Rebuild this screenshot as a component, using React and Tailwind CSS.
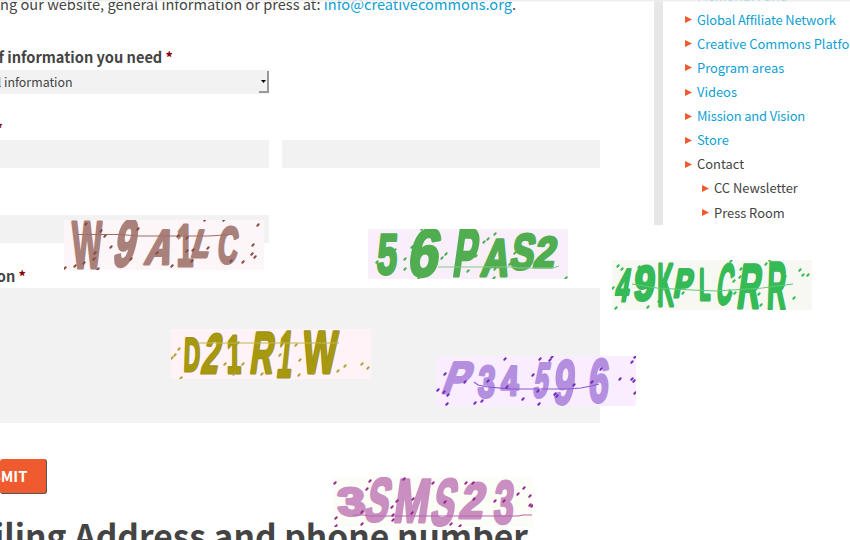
const captchas = [
  {
    place: "left-[64px] top-[220px]", bg: "#fdf6f9", ink: "#a9817a", edge: "#a9817a", line: "#a06d64", dot: "#874c42",
    chars: [["W", 7, 39, -1, 50, 0], ["9", 51, 75, -2, 48, -12], ["A", 82, 113, 8, 46, -16], ["1", 113, 129, 2, 48, 0], ["L", 129, 149, 8, 39, -16], ["C", 154, 175, 5, 45, -6]],
    path: "M13 14.5H55L75 16H145L168 14.5",
    dots: [[22, 4], [37, 11], [41, 16], [74, 9], [47, 27], [31, 33], [30, 39], [20, 43], [11, 46], [1, 48], [34, 49], [67, 39], [93, 33], [108, 46], [114, 16], [123, 18], [123, 31], [128, 41], [129, 30], [144, 28], [141, 0], [160, 0], [194, 5], [189, 25], [188, 34], [191, 37], [179, 42], [167, 41]],
  },
  {
    place: "left-[368px] top-[229px]", bg: "#f9effb", ink: "#50ad50", edge: "#50ad50", line: "#83ca85", dot: "#50ad50",
    chars: [["5", 9, 30, 3, 47, -4], ["6", 42, 74, -2, 49, -10], ["P", 87, 111, -2, 49, -8], ["A", 113, 145, 8, 49, -10], ["S", 143, 169, 3, 42, -10], ["2", 167, 190, 6, 40, -12]],
    path: "M70 38H145L150 39H185L191 37",
    dots: [[27, 21], [9, 33], [37, 30], [44, 18], [37, 40], [51, 49], [78, 25], [74, 29], [54, 0], [116, 13], [127, 5], [120, 10], [108, 27], [100, 42], [127, 40], [142, 35], [147, 24], [126, 49], [198, 49]],
  },
  {
    place: "left-[612px] top-[260px]", bg: "#f7f8f1", ink: "#33bb55", edge: "#3fb45c", line: "#62c978", dot: "#33bb55",
    chars: [["4", 4, 20, 7, 43, -10], ["9", 22, 44, 4, 42, -6], ["K", 45, 62, 1, 48, 0], ["P", 63, 82, 7, 39, -10], ["L", 87, 99, 7, 42, 0], ["C", 105, 123, 2, 46, -8], ["R", 126, 151, 2, 50, -8], ["R", 155, 175, 0, 51, -2]],
    path: "M20 24L45 28L80 30L104 31L150 28L181 24",
    dots: [[6, 6], [10, 9], [27, 7], [1, 28], [6, 32], [4, 48], [36, 47], [47, 41], [54, 13], [71, 33], [119, 1], [122, 21], [128, 17], [129, 9], [117, 40], [123, 33], [147, 34], [149, 45], [154, 4], [158, 0], [173, 17], [188, 10], [191, 15], [196, 15], [182, 38]],
  },
  {
    place: "left-[171px] top-[329px]", bg: "#fff3f7", ink: "#a6980f", edge: "#a0921a", line: "#c1b54b", dot: "#b2a337",
    chars: [["D", 13, 29, 7, 44, -2], ["2", 32, 52, 3, 46, -12], ["1", 56, 70, 5, 46, 0], ["R", 80, 105, 1, 46, -8], ["1", 107, 123, 0, 50, -6], ["W", 131, 168, 0, 46, -4]],
    path: "M28 14H168",
    dots: [[8, 20], [4, 26], [1, 29], [10, 49], [54, 35], [72, 35], [63, 45], [67, 14], [91, 45], [109, 26], [125, 16], [128, 46], [129, 31], [143, 44], [167, 42], [174, 37], [191, 35], [197, 39]],
  },
  {
    place: "left-[436px] top-[356px]", bg: "#f9edff", ink: "#b48fe0", edge: "#b48fe0", line: "#8b5bce", dot: "#712cc0",
    chars: [["P", 10, 37, 4, 39, -20], ["3", 42, 60, 8, 43, -4], ["4", 65, 83, 8, 41, -2], ["5", 98, 115, 5, 43, -10], ["9", 118, 140, 2, 50, -6], ["6", 153, 174, 1, 48, -4]],
    path: "M38 26L42 29L52 31L75 33H132L145 32L155 30L163 28",
    dots: [[9, 18], [2, 34], [8, 36], [12, 39], [11, 48], [29, 26], [39, 47], [46, 45], [52, 25], [69, 3], [71, 31], [87, 43], [97, 19], [104, 3], [114, 4], [116, 1], [102, 35], [103, 48], [119, 38], [121, 40], [138, 29], [156, 26], [165, 13], [184, 23], [196, 6], [199, 1], [196, 23], [198, 25], [199, 37]],
  },
  {
    place: "left-[333px] top-[477px]", bg: "#fdfdf7", ink: "#c88fc0", edge: "#c88fc0", line: "#b864b0", dot: "#97298f",
    chars: [["3", 5, 31, 9, 40, 4], ["S", 33, 60, -1, 46, -12], ["M", 62, 98, 0, 47, -8], ["S", 99, 126, 0, 50, -12], ["2", 128, 154, 4, 43, -12], ["3", 161, 182, 2, 48, -4]],
    path: "M20 38H32L35 39H185L190 38H199",
    dots: [[2, 6], [37, 4], [34, 12], [71, 2], [100, 6], [133, 6], [140, 6], [29, 35], [29, 47], [3, 41], [3, 49], [64, 24], [59, 30], [60, 38], [60, 43], [80, 22], [79, 36], [112, 25], [141, 22], [162, 24], [171, 24], [118, 47], [127, 49], [185, 17], [191, 11], [197, 19], [197, 28], [199, 29]],
  },
];

const inkWidth = { W: 0.94, M: 0.76, A: 0.72, C: 0.64, R: 0.66, P: 0.56, S: 0.62, K: 0.66, L: 0.54, D: 0.6, 1: 0.46 };

function Glyph({ data, ink, edge }) {
  const [ch, x1, x2, y1, y2, skew] = data;
  const size = (y2 - y1 - 4) / 0.7;
  const lean = Math.tan((-skew * Math.PI) / 180) * (y2 - y1);
  const sx = (x2 - x1 - 2 - lean * 0.3) / ((inkWidth[ch] || 0.5) * size);
  const cx = (x1 + x2) / 2 - lean / 2;
  return (
    <text
      transform={`translate(${cx} ${y2 - 2}) skewX(${skew}) scale(${sx} 1)`}
      fontSize={size}
      textAnchor="middle"
      fill={ink}
      stroke={edge}
      strokeWidth="3"
      strokeLinejoin="round"
      paintOrder="stroke"
    >
      {ch}
    </text>
  );
}

function Captcha({ c }) {
  return (
    <svg className={"absolute h-[50px] w-[200px] overflow-hidden font-['Liberation_Sans',sans-serif] font-bold " + c.place} viewBox="0 0 200 50">
      <rect width="200" height="50" fill={c.bg} />
      {c.chars.map((d, i) => <Glyph key={i} data={d} ink={c.ink} edge={c.edge} />)}
      <path d={c.path} fill="none" stroke={c.line} strokeWidth="1.2" />
      {c.dots.map(([x, y], i) => (
        <path key={i} d={`M${x - 0.7} ${y + 0.7}l1.4 -1.4`} stroke={c.dot} strokeWidth="2" strokeLinecap="round" />
      ))}
    </svg>
  );
}

function Item({ children, link, sub, tight }) {
  return (
    <li className={"flex h-[24.1px] items-center whitespace-nowrap " + (sub ? "pl-[17px] " : "") + (tight ? "tracking-[-0.13px] " : "") + (link ? "text-[#0f9fd3]" : "text-[#444]")}>
      <svg className="mr-[5px] h-[7px] w-[7px] shrink-0" viewBox="0 0 7 7"><path d="M0 0L7 3.5L0 7Z" fill="#ef5a2f" /></svg>
      <span>{children}</span>
    </li>
  );
}

const Star = () => <span className="text-[#8a0000]">*</span>;

export default function App() {
  return (
    <div className="relative h-[540px] w-[850px] overflow-hidden bg-white font-['Noto_Sans_CJK_SC',sans-serif] text-[#444]">
      <div className="flex">
        <main className="flex w-[600px] shrink-0 flex-col">
          <p className="-mt-2 flex h-6 w-[516px] justify-end whitespace-pre text-[14.6px] leading-6">
            For questions regarding our website, general information or press at: <a className="text-[#0f9fd3]">info@creativecommons.org</a>.
          </p>
          <div className="mt-[29px] flex h-6 w-[173px] justify-end whitespace-pre text-[14.6px] font-bold leading-6">Type of information you need <Star /></div>
          <div className="mt-px flex h-6 w-[269px] items-center bg-[#f2f2f2] text-[12.4px]">
            <span className="flex w-[72.6px] justify-end whitespace-nowrap">General information</span>
            <span className="ml-auto flex h-[22px] w-[10px] items-center justify-center border-b-2 border-r-2 border-[#999] bg-[#f2f2f2]">
              <svg className="h-[3px] w-[5px]" viewBox="0 0 5 3"><path d="M0 0H5L2.5 3Z" fill="#000" /></svg>
            </span>
          </div>
          <div className="mt-[22px] flex h-6 w-[3px] justify-end whitespace-pre text-[14.6px] font-bold leading-6">Name <Star /></div>
          <div className="flex gap-[13px]">
            <div className="h-7 w-[269px] bg-[#f2f2f2]" />
            <div className="h-7 w-[318px] bg-[#f2f2f2]" />
          </div>
          <div className="mt-[47px] h-7 w-[269px] bg-[#f2f2f2]" />
          <div className="mt-[21px] flex h-6 w-[26px] justify-end whitespace-pre text-[14.6px] font-bold leading-6">Question <Star /></div>
          <div className="h-[135px] bg-[#f2f2f2]" />
          <div className="mt-9 flex h-[35px] w-[47px] items-center justify-end whitespace-nowrap rounded-[3px] border-b border-r border-[#555] bg-[#ef5a2f] pr-[18.5px] text-[14.8px] font-bold text-white">SUBMIT</div>
          <h2 className="mt-[17px] flex h-12 w-[528px] justify-end whitespace-nowrap text-[33.6px] font-bold leading-[48px]">Mailing Address and phone number</h2>
        </main>
        <aside className="ml-[54px] h-[225px] w-[196px] shrink-0 border-l-[9px] border-[#e7e7e7] pl-[22px]">
          <ul className="-mt-[16.4px] text-[12.9px] leading-6">
            <Item link>Memorial Fund</Item>
            <Item link tight>Global Affiliate Network</Item>
            <Item link>Creative Commons Platform</Item>
            <Item link>Program areas</Item>
            <Item link>Videos</Item>
            <Item link tight>Mission and Vision</Item>
            <Item link>Store</Item>
            <Item>Contact</Item>
            <Item sub>CC Newsletter</Item>
            <Item sub>Press Room</Item>
          </ul>
        </aside>
      </div>
      <div className="absolute left-0 top-0 h-[2px] w-full bg-gradient-to-b from-[#e8e8e8]/80 to-[#f5f5f5]/60" />
      {captchas.map((c) => <Captcha key={c.place} c={c} />)}
    </div>
  );
}
